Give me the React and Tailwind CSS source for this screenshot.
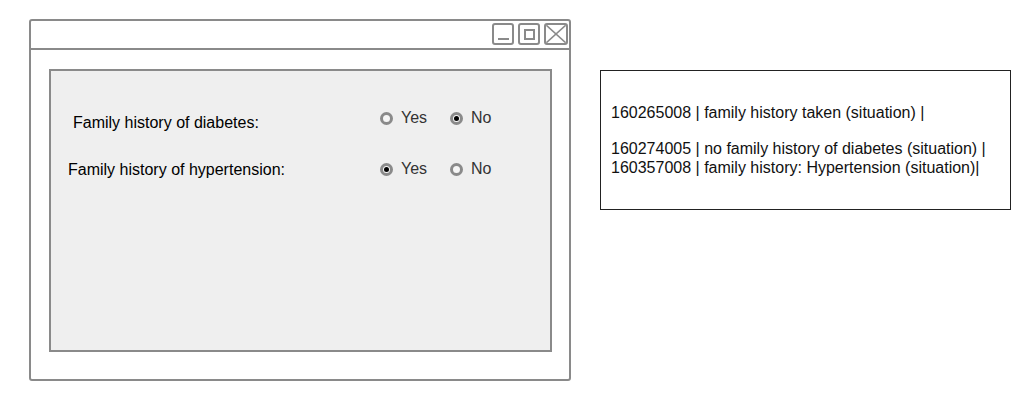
import React from "react";

function Radio({ checked, label, className = "" }) {
  return (
    <div className={"flex items-center " + className}>
      <span className="box-border w-[13px] h-[13px] rounded-full border-[3px] border-[#8a8a8a] bg-[#f6f6f6] flex items-center justify-center">
        {checked && <span className="w-[5px] h-[5px] rounded-full bg-black" />}
      </span>
      <span className="ml-[8px] text-[#333]">{label}</span>
    </div>
  );
}

function RadioGroup({ value }) {
  return (
    <div className="flex items-center pt-[1px]">
      <Radio checked={value === "yes"} label="Yes" className="w-[70px]" />
      <Radio checked={value === "no"} label="No" />
    </div>
  );
}

export default function App() {
  return (
    <div className="w-[1035px] h-[400px] bg-white font-['Liberation_Sans',Arial,sans-serif] text-[16px] leading-[18px] flex items-start pt-[19px] pl-[29px]">
      {/* Window */}
      <div className="w-[542px] h-[362px] border-2 border-[#8a8a8a] rounded-[3px] flex flex-col box-border">
        {/* Title bar */}
        <div className="h-[29px] border-b-2 border-[#8a8a8a] flex justify-end items-start pt-[2px] pr-[1px] gap-[4px] box-border">
          <div className="w-[22px] h-[22px] border-2 border-[#8a8a8a] rounded-[3px] box-border flex items-end justify-center pb-[3px]">
            <span className="w-[11px] h-[2px] bg-[#8a8a8a]" />
          </div>
          <div className="w-[22px] h-[22px] border-2 border-[#8a8a8a] rounded-[3px] box-border flex items-center justify-center">
            <span className="w-[11px] h-[11px] border-2 border-[#8a8a8a] box-border" />
          </div>
          <div className="w-[24px] h-[22px] border-2 border-[#8a8a8a] rounded-[3px] box-border overflow-hidden">
            <svg width="20" height="18" viewBox="0 0 20 18" className="block">
              <line x1="0" y1="0" x2="20" y2="18" stroke="#8a8a8a" strokeWidth="1.6" />
              <line x1="20" y1="0" x2="0" y2="18" stroke="#8a8a8a" strokeWidth="1.6" />
            </svg>
          </div>
        </div>
        {/* Body */}
        <div className="flex-1 pt-[19px] pl-[18px] pr-[17px] pb-[27px] box-border">
          <div className="h-full border-2 border-[#8a8a8a] bg-[#efefef] box-border pt-[37px]">
            <div className="flex items-start">
              <div className="w-[329px] pl-[22px] pt-[6px] text-black">Family history of diabetes:</div>
              <RadioGroup value="no" />
            </div>
            <div className="flex items-start mt-[27px]">
              <div className="w-[329px] pl-[17px] pt-[2px] text-black">Family history of hypertension:</div>
              <RadioGroup value="yes" />
            </div>
          </div>
        </div>
      </div>

      {/* Right box */}
      <div className="ml-[29px] mt-[51px] w-[411px] h-[140px] border border-[#222] box-border pt-[32px] pl-[10px] text-[#111] leading-[19px]">
        <div className="mb-[17px]">160265008 | family history taken (situation) |</div>
        <div>160274005 | no family history of diabetes (situation) |</div>
        <div>160357008 | family history: Hypertension (situation)|</div>
      </div>
    </div>
  );
}
